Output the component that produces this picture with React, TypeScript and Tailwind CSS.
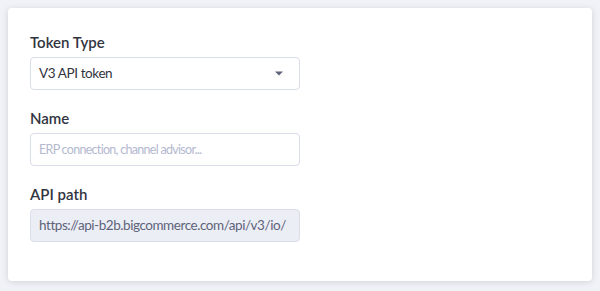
import React from "react";

function Field({ label, children }: { label: string; children: React.ReactNode }) {
  return (
    <div className="flex flex-col">
      <label className="text-[15px] leading-5 font-semibold text-[#313440] mb-[5px]">{label}</label>
      {children}
    </div>
  );
}

export default function App() {
  return (
    <div
      className="w-[600px] h-[291px] bg-[#f1f2f7] pt-2 px-2"
      style={{ fontFamily: "Lato, 'Open Sans', sans-serif" }}
    >
      <div className="bg-white rounded-[4px] shadow-[0_1px_6px_rgba(49,52,64,0.16)] px-[22px] pt-[24px] pb-[39px] flex flex-col gap-[18px]">
        <Field label="Token Type">
          <div className="w-[270px] h-[33px] border border-[#d9dce9] rounded-[4px] flex items-center justify-between pl-2 pr-[16px]">
            <span className="text-[13.5px] tracking-[-0.4px] text-[#313440]">V3 API token</span>
            <svg width="8" height="5" viewBox="0 0 8 5">
              <path d="M0 0.5 H8 L4 4.5 Z" fill="#5e637a" />
            </svg>
          </div>
        </Field>
        <Field label="Name">
          <input
            className="w-[270px] h-[33px] border border-[#d9dce9] rounded-[4px] px-2 text-[12.5px] tracking-[-0.7px] text-[#313440] placeholder:text-[#b4b9cf] outline-none"
            placeholder="ERP connection, channel advisor..."
          />
        </Field>
        <Field label="API path">
          <div className="w-[270px] h-[33px] border border-[#dbdeea] bg-[#eceef5] rounded-[4px] px-2 flex items-center">
            <span className="text-[13.5px] tracking-[-0.45px] whitespace-nowrap text-[#5e637a]">https://api-b2b.bigcommerce.com/api/v3/io/</span>
          </div>
        </Field>
      </div>
    </div>
  );
}
